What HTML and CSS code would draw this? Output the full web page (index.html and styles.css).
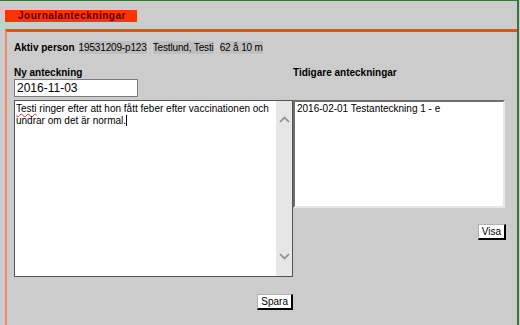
FILE: index.html
```html
<!DOCTYPE html>
<html lang="sv">
<head>
<meta charset="utf-8">
<title>Journalanteckningar</title>
<link rel="stylesheet" href="styles.css">
</head>
<body>
<div class="frame">
  <div class="tab">Journalanteckningar</div>
  <div class="panel">
    <div class="person-row">
      <span class="lbl">Aktiv person</span>
      <span class="field">19531209-p123</span>
      <span class="field">Testlund, Testi</span>
      <span class="field">62 å 10 m</span>
    </div>
    <div class="grid">
      <div class="lbl head">Ny anteckning</div>
      <div class="lbl head">Tidigare anteckningar</div>
      <input class="date" type="text" value="2016-11-03">
      <div class="spacer"></div>
      <div class="editor">
        <div class="note-text">
          <div class="line"><span class="spell">Testi</span><span> ringer efter att hon fått feber efter vaccinationen och</span></div>
          <div class="line">undrar om det är normal.<span class="caret"></span></div>
        </div>
        <div class="scrollbar">
          <svg width="11" height="7" viewBox="0 0 11 7"><path d="M1 6 L5.5 1.5 L10 6" fill="none" stroke="#8e8e8e" stroke-width="1.7"/></svg>
          <svg width="11" height="7" viewBox="0 0 11 7"><path d="M1 1 L5.5 5.5 L10 1" fill="none" stroke="#8e8e8e" stroke-width="1.7"/></svg>
        </div>
      </div>
      <div class="prev">
        <div class="listbox">
          <div class="item">2016-02-01 Testanteckning 1 - e</div>
        </div>
        <button class="btn" type="button">Visa</button>
      </div>
      <div class="save-row">
        <button class="btn" type="button">Spara</button>
      </div>
    </div>
  </div>
</div>
</body>
</html>
```
FILE: styles.css
```css
* { box-sizing: border-box; }
html, body {
  margin: 0;
  padding: 0;
  background: #cccccc;
}
body {
  font-family: "Liberation Sans", Arial, sans-serif;
  font-size: 10px;
  color: #000;
}
.frame {
  width: 519px;
  height: 325px;
  border-top: 1px solid #2f7a34;
  border-right: 2px solid #2f7a34;
  display: flex;
  flex-direction: column;
  padding-top: 9px;
}
.tab {
  margin-left: 5px;
  width: 132px;
  height: 12px;
  line-height: 12px;
  background: #ff3300;
  color: #5c0000;
  font-weight: bold;
  font-size: 10px;
  letter-spacing: 0.5px;
  padding-left: 13px;
}
.panel {
  flex: 1;
  margin-top: 7px;
  margin-left: 5px;
  border-top: 3px solid #f24a1c;
  border-left: 2px solid #ec8a6c;
  padding: 8px 0 0 7px;
}
.person-row {
  display: flex;
  align-items: center;
  gap: 4px;
  height: 15px;
}
.lbl {
  font-weight: bold;
  font-size: 10px;
}
.person-row .lbl { margin-right: -1px; }
.field {
  background: #bfbfbf;
  border: 1px solid #d0d0d0;
  line-height: 13px;
  padding: 0;
  letter-spacing: -0.15px;
}
.grid {
  margin-top: 11px;
  display: grid;
  grid-template-columns: 279px 213px;
  align-items: start;
}
.head {
  line-height: 13px;
  height: 13px;
}
.date {
  width: 124px;
  height: 18px;
  border: 1px solid #7a7a7a;
  background: #fff;
  font-family: "Liberation Sans", Arial, sans-serif;
  font-size: 12px;
  padding: 0 2px;
  margin: 0;
  color: #000;
}
.editor {
  margin-top: 3px;
  height: 177px;
  display: flex;
  background: #fff;
  border: 1px solid #555;
}
.note-text {
  flex: 1;
  padding: 2px 1px 0 1px;
  font-size: 10px;
}
.line {
  line-height: 12px;
  white-space: nowrap;
}
.spell {
  text-decoration: underline wavy #e03030;
  text-decoration-thickness: 1px;
  text-underline-offset: 1px;
}
.caret {
  display: inline-block;
  width: 1px;
  height: 11px;
  background: #000;
  vertical-align: -2px;
}
.scrollbar {
  width: 16px;
  background: #e6e6e6;
  display: flex;
  flex-direction: column;
  align-items: center;
  justify-content: space-between;
  padding: 15px 0 16px;
}
.scrollbar svg { display: block; }
.prev {
  margin-top: 3px;
  display: flex;
  flex-direction: column;
  align-items: flex-end;
}
.listbox {
  width: 212px;
  align-self: flex-start;
  height: 108px;
  background: #fff;
  border-style: solid;
  border-width: 2px;
  border-color: #6e6e6e #e6e6e6 #e6e6e6 #6e6e6e;
  padding: 1px 2px;
}
.item {
  line-height: 12px;
}
.btn {
  font-family: "Liberation Sans", Arial, sans-serif;
  font-size: 10px;
  background: #fff;
  color: #000;
  border-style: solid;
  border-color: #b0b0b0 #000 #000 #b0b0b0;
  border-width: 1px 2px 2px 1px;
  padding: 0 3px;
  height: 16px;
  line-height: 12px;
  margin: 0;
  cursor: pointer;
}
.prev .btn { margin-top: 16px; }
.save-row {
  grid-column: 1;
  display: flex;
  justify-content: flex-end;
  margin-top: 17px;
}
```
